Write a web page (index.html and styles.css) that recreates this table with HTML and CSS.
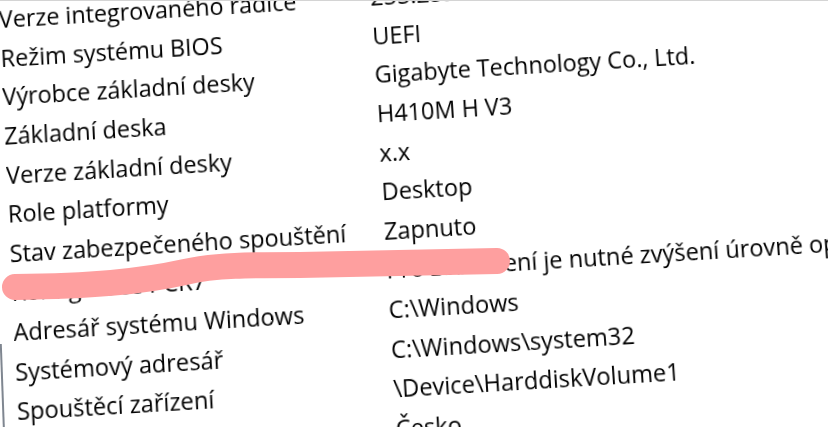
FILE: index.html
```html
<!DOCTYPE html>
<html lang="cs">
<head>
<meta charset="utf-8">
<title>Souhrn systému</title>
<link rel="stylesheet" href="styles.css">
</head>
<body>
<div class="sheet">
  <div class="row"><span class="k">Verze integrovaného řadiče</span><span class="v">255.255</span></div>
  <div class="row"><span class="k">Režim systému BIOS</span><span class="v">UEFI</span></div>
  <div class="row"><span class="k">Výrobce základní desky</span><span class="v">Gigabyte Technology Co., Ltd.</span></div>
  <div class="row"><span class="k">Základní deska</span><span class="v">H410M H V3</span></div>
  <div class="row"><span class="k">Verze základní desky</span><span class="v">x.x</span></div>
  <div class="row"><span class="k">Role platformy</span><span class="v">Desktop</span></div>
  <div class="row"><span class="k">Stav zabezpečeného spouštění</span><span class="v">Zapnuto</span></div>
  <div class="row"><span class="k">Konfigurace PCR7</span><span class="v">Pro zobrazení je nutné zvýšení úrovně oprávnění</span></div>
  <div class="row"><span class="k">Adresář systému Windows</span><span class="v">C:\Windows</span></div>
  <div class="row"><span class="k">Systémový adresář</span><span class="v">C:\Windows\system32</span></div>
  <div class="row"><span class="k">Spouštěcí zařízení</span><span class="v">\Device\HarddiskVolume1</span></div>
  <div class="row"><span class="k">Národní prostředí</span><span class="v">Česko</span></div>
</div>
<svg class="marks" width="828" height="427" viewBox="0 0 828 427" aria-hidden="true">
  <line x1="0" y1="0.5" x2="828" y2="0.5" stroke="#d4d4d4" stroke-width="1"/>
  <line x1="0.8" y1="344" x2="3.8" y2="427" stroke="#7f8690" stroke-width="2"/>
  <path d="M15 287 C 90 286, 140 282, 185 272 C 215 265, 250 265, 300 265 L 497 261" fill="none" stroke="#fe9f9f" stroke-width="26" stroke-linecap="round" stroke-linejoin="round"/>
</svg>
</body>
</html>
```
FILE: styles.css
```css
html, body {
  margin: 0;
  height: 100%;
  overflow: hidden;
  background: #ffffff;
}

body {
  position: relative;
  font-family: "Open Sans", "Noto Sans", "DejaVu Sans", sans-serif;
  font-size: 23.3px;
  color: #000000;
}

.sheet {
  width: 1100px;
  margin-top: 0;
  transform-origin: 0 0;
  transform: matrix3d(1, -0.06, 0, 0, 0.0467, 1, 0, -0.000035, 0, 0, 1, 0, -2.13, 0, 0, 1);
}

.row {
  display: grid;
  grid-template-columns: 371px 1fr;
  height: 38.65px;
  line-height: 38.65px;
  white-space: nowrap;
}

.marks {
  position: absolute;
  left: 0;
  top: 0;
  pointer-events: none;
}
```
